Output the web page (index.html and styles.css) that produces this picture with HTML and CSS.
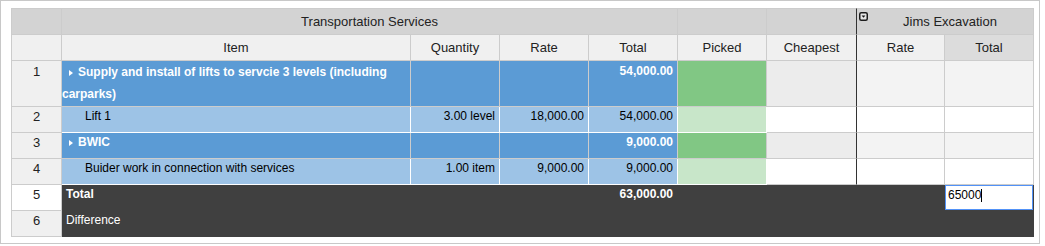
FILE: index.html
```html
<!DOCTYPE html>
<html>
<head>
<meta charset="utf-8">
<title>Grid</title>
<link rel="stylesheet" href="styles.css">
</head>
<body>
<div class="frame">
  <table class="grid">
    <colgroup>
      <col class="c-rh"><col class="c-item"><col class="c-num"><col class="c-num"><col class="c-num"><col class="c-num"><col class="c-cheap"><col class="c-jr"><col class="c-num">
    </colgroup>
    <thead>
      <tr class="h1">
        <th class="rh"></th>
        <th colspan="4">Transportation Services</th>
        <th></th>
        <th class="sep"></th>
        <th colspan="2" class="jims"><span class="menu-btn"><svg width="9" height="9" viewBox="0 0 9 9"><rect x="0.75" y="0.75" width="7.5" height="7.5" rx="1.5" fill="#e6e6e6" stroke="#1c1c1c" stroke-width="1.5"/><path d="M2.6 3.4 H6.4 L4.5 5.8 Z" fill="#111"/></svg></span>Jims Excavation</th>
      </tr>
      <tr class="h2">
        <th class="rh"></th>
        <th>Item</th>
        <th>Quantity</th>
        <th>Rate</th>
        <th>Total</th>
        <th>Picked</th>
        <th class="sep">Cheapest</th>
        <th>Rate</th>
        <th class="hl">Total</th>
      </tr>
    </thead>
    <tbody>
      <tr class="parent tall">
        <th class="rh">1</th>
        <td class="item"><span class="tri"></span>Supply and install of lifts to servcie 3 levels (including carparks)</td>
        <td class="num"></td>
        <td class="num"></td>
        <td class="num">54,000.00</td>
        <td class="picked"></td>
        <td class="cheap sep"></td>
        <td class="sup"></td>
        <td class="sup"></td>
      </tr>
      <tr class="child">
        <th class="rh">2</th>
        <td class="item">Lift 1</td>
        <td class="num">3.00 level</td>
        <td class="num">18,000.00</td>
        <td class="num">54,000.00</td>
        <td class="picked"></td>
        <td class="cheap sep"></td>
        <td class="sup"></td>
        <td class="sup"></td>
      </tr>
      <tr class="parent">
        <th class="rh">3</th>
        <td class="item"><span class="tri"></span>BWIC</td>
        <td class="num"></td>
        <td class="num"></td>
        <td class="num">9,000.00</td>
        <td class="picked"></td>
        <td class="cheap sep"></td>
        <td class="sup"></td>
        <td class="sup"></td>
      </tr>
      <tr class="child">
        <th class="rh">4</th>
        <td class="item">Buider work in connection with services</td>
        <td class="num">1.00 item</td>
        <td class="num">9,000.00</td>
        <td class="num">9,000.00</td>
        <td class="picked"></td>
        <td class="cheap sep"></td>
        <td class="sup"></td>
        <td class="sup"></td>
      </tr>
      <tr class="summary">
        <th class="rh active">5</th>
        <td class="label strong">Total</td>
        <td class="num"></td>
        <td class="num"></td>
        <td class="num strong">63,000.00</td>
        <td></td>
        <td></td>
        <td></td>
        <td class="sel"><div class="editor">65000<span class="caret"></span></div></td>
      </tr>
      <tr class="summary">
        <th class="rh">6</th>
        <td class="label">Difference</td>
        <td class="num"></td>
        <td class="num"></td>
        <td class="num"></td>
        <td></td>
        <td></td>
        <td></td>
        <td></td>
      </tr>
    </tbody>
  </table>
</div>
</body>
</html>
```

FILE: styles.css
```css
html, body {
  margin: 0;
  padding: 0;
  background: #fff;
}

body {
  font-family: "Liberation Sans", Arial, sans-serif;
  font-size: 13px;
  color: #000;
}

.frame {
  box-sizing: border-box;
  width: 1040px;
  height: 244px;
  border: 1px solid #c8c8c8;
  padding: 7px 0 0 10px;
}

.grid {
  border-collapse: separate;
  border-spacing: 0;
  table-layout: fixed;
  width: 1023px;
}

.c-rh { width: 51px; }
.c-item { width: 349px; }
.c-num { width: 89px; }
.c-cheap { width: 90px; }
.c-jr { width: 88px; }

.grid th,
.grid td {
  box-sizing: border-box;
  height: 26px;
  padding: 0 4px;
  border-right: 1px solid #ccc;
  border-bottom: 1px solid #ccc;
  overflow: hidden;
  white-space: nowrap;
}

.grid th {
  font-size: 13px;
  font-weight: normal;
  color: #222;
  text-align: center;
  vertical-align: middle;
  line-height: 21px;
  background: #f0f0f0;
}

.grid th.rh {
  border-left: 1px solid #ccc;
}

.grid .h1 th {
  height: 27px;
  border-top: 1px solid #ccc;
  background: #d3d3d3;
}

.grid .h2 th.hl {
  background: #dcdcdc;
}

.grid th.sep,
.grid td.sep {
  border-right-color: #333;
}

.jims {
  position: relative;
  padding-left: 14px !important;
}

.menu-btn {
  position: absolute;
  left: 2px;
  top: 3px;
  width: 9px;
  height: 9px;
  line-height: 0;
}

.grid tbody th {
  vertical-align: top;
  line-height: 19px;
}

.grid tbody th.active {
  background: #fff;
}

.grid td {
  font-size: 12px;
  line-height: 19px;
  vertical-align: top;
  background: #fff;
}

.grid td.num {
  text-align: right;
}

.grid tr.tall td,
.grid tr.tall th {
  height: 46px;
  line-height: 21px;
}

.grid tr.tall td.item {
  white-space: normal;
  line-height: 22px;
}

/* parent rows */
.parent td {
  background: #5b9bd5;
  color: #fff;
  font-weight: bold;
}

.parent td.item {
  padding-left: 0;
}

.tri {
  display: inline-block;
  width: 0;
  height: 0;
  border-left: 4px solid #fff;
  border-top: 3.5px solid transparent;
  border-bottom: 3.5px solid transparent;
  margin: 0 5px 0 7px;
  vertical-align: 0;
}

.parent td.picked { background: #81c784; }
.parent td.cheap { background: #ececec; }
.parent td.sup { background: #f3f3f3; }

/* child rows */
.child td {
  background: #9dc3e6;
  border-right-color: #fff;
  border-bottom-color: #fff;
}

.child td.item {
  padding-left: 23px;
}

.child td.picked {
  background: #c8e6c9;
}

.child td.cheap,
.child td.sup {
  background: #fff;
  border-bottom-color: #ccc;
}

.child td.cheap { border-right-color: #333; }
.child td.sup { border-right-color: #ccc; }

/* summary rows */
.summary td {
  background: #404040;
  color: #fff;
  border-right-color: #404040;
  border-bottom-color: #404040;
}

.summary td.strong {
  font-weight: bold;
}

.summary td.sel {
  position: relative;
}

.editor {
  position: absolute;
  left: -1px;
  right: -1px;
  top: -1px;
  bottom: -1px;
  border: 2px solid #5292f7;
  background: #fff;
  color: #000;
  font-size: 12px;
  line-height: 18px;
  padding: 0 2px;
}

.caret {
  display: inline-block;
  width: 1px;
  height: 13px;
  background: #000;
  vertical-align: -3px;
}
```
